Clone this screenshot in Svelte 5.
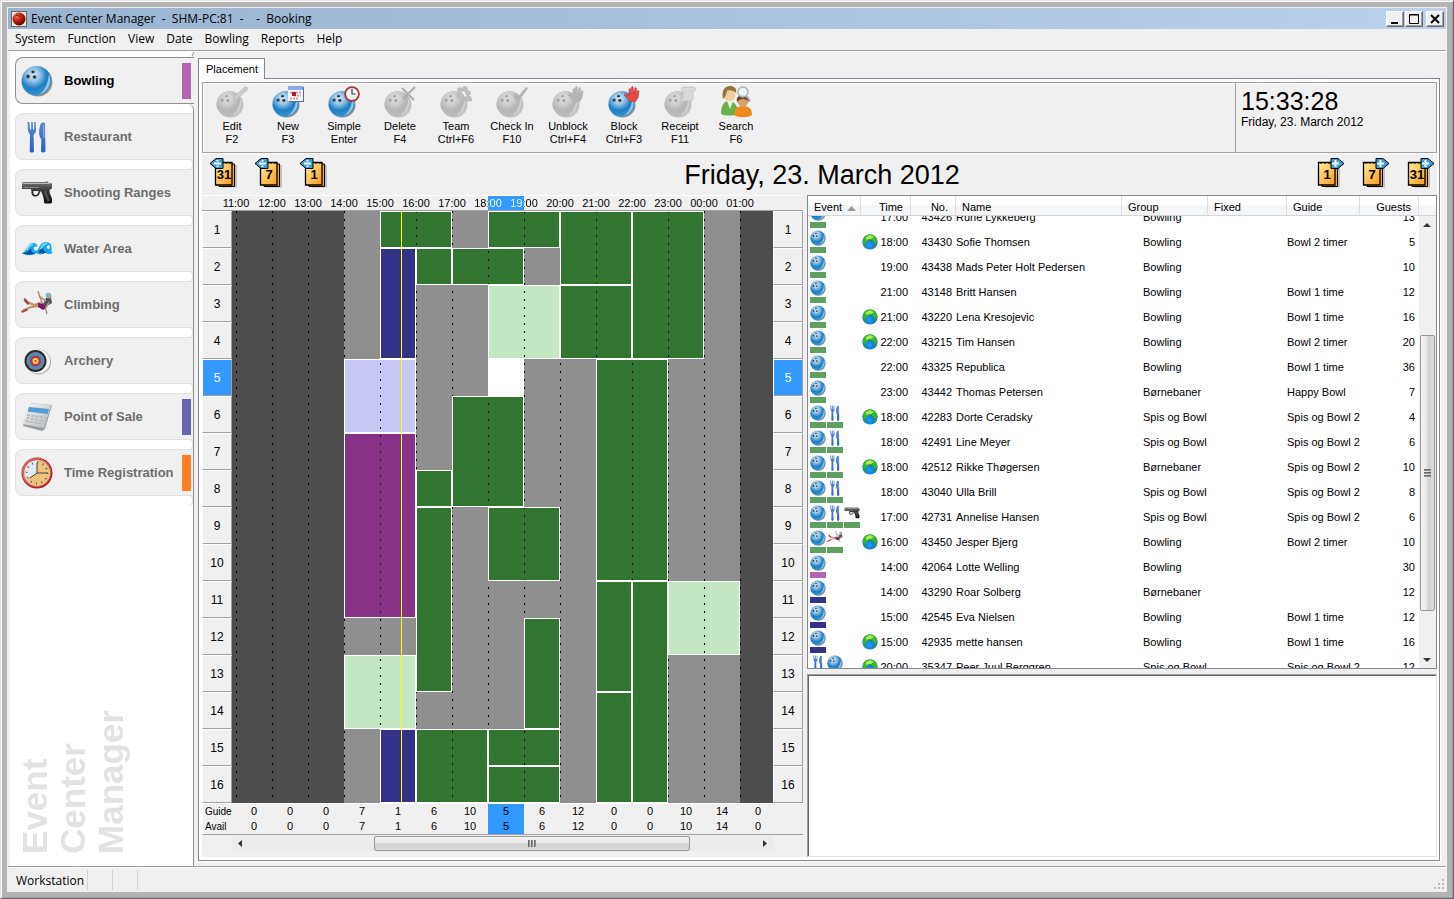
<script>
  const HOUR = 36;
  const LANE = 37;
  const FIRST_HOUR = 11;

  const menus = ['System', 'Function', 'View', 'Date', 'Bowling', 'Reports', 'Help'];

  const modules = [
    { name: 'Bowling', icon: 'ball', bar: 'orchid' },
    { name: 'Restaurant', icon: 'cutlery' },
    { name: 'Shooting Ranges', icon: 'gun' },
    { name: 'Water Area', icon: 'waves' },
    { name: 'Climbing', icon: 'climber' },
    { name: 'Archery', icon: 'target' },
    { name: 'Point of Sale', icon: 'calculator', bar: 'indigo' },
    { name: 'Time Registration', icon: 'clock', bar: 'orange' }
  ];
  let activeModule = $state('Bowling');

  const tools = [
    { name: 'Edit', key: 'F2', badge: 'pencil', disabled: true },
    { name: 'New', key: 'F3', badge: 'calendar' },
    { name: 'Simple', key: 'Enter', badge: 'smallclock' },
    { name: 'Delete', key: 'F4', badge: 'cross', disabled: true },
    { name: 'Team', key: 'Ctrl+F6', badge: 'team', disabled: true },
    { name: 'Check In', key: 'F10', badge: 'check', disabled: true },
    { name: 'Unblock', key: 'Ctrl+F4', badge: 'hand', disabled: true },
    { name: 'Block', key: 'Ctrl+F3', badge: 'hand' },
    { name: 'Receipt', key: 'F11', badge: 'receipt', disabled: true },
    { name: 'Search', key: 'F6', badge: 'people' }
  ];

  const hours = Array.from({ length: 15 }, (_, i) => (FIRST_HOUR + i) % 24);
  const lanes = Array.from({ length: 16 }, (_, i) => i + 1);
  const selected = { hour: 18, lane: 5 };
  const now = { hour: 15, minute: 34 };

  const avail = [0, 0, 0, 7, 1, 6, 10, 5, 6, 12, 0, 0, 10, 14, 0];

  // from hour, to hour, first lane, lane count, kind
  const bookings = [
    [15, 17, 1, 1, 'green'],
    [18, 20, 1, 1, 'green'],
    [20, 22, 1, 2, 'green'],
    [22, 24, 1, 4, 'green'],
    [15, 16, 2, 3, 'navy'],
    [16, 17, 2, 1, 'green'],
    [17, 19, 2, 1, 'green'],
    [18, 20, 3, 2, 'mint'],
    [20, 22, 3, 2, 'green'],
    [14, 16, 5, 2, 'lilac'],
    [18, 19, 5, 1, 'free'],
    [21, 23, 5, 6, 'green'],
    [17, 19, 6, 3, 'green'],
    [14, 16, 7, 5, 'purple'],
    [16, 17, 8, 1, 'green'],
    [16, 17, 9, 5, 'green'],
    [18, 20, 9, 2, 'green'],
    [21, 22, 11, 3, 'green'],
    [22, 23, 11, 6, 'green'],
    [23, 25, 11, 2, 'mint'],
    [19, 20, 12, 3, 'green'],
    [14, 16, 13, 2, 'mint'],
    [21, 22, 14, 3, 'green'],
    [15, 16, 15, 2, 'navy'],
    [16, 18, 15, 2, 'green'],
    [18, 20, 15, 1, 'green'],
    [18, 20, 16, 1, 'green']
  ];

  const events = [
    { icons: ['ball'], bar: 'leaf', time: '17:00', no: 43426, name: 'Rune Lykkeberg', group: 'Bowling', guide: '', guests: 13 },
    { icons: ['ball'], bar: 'leaf', web: true, time: '18:00', no: 43430, name: 'Sofie Thomsen', group: 'Bowling', guide: 'Bowl 2 timer', guests: 5 },
    { icons: ['ball'], bar: 'leaf', time: '19:00', no: 43438, name: 'Mads Peter Holt Pedersen', group: 'Bowling', guide: '', guests: 10 },
    { icons: ['ball'], bar: 'leaf', time: '21:00', no: 43148, name: 'Britt Hansen', group: 'Bowling', guide: 'Bowl 1 time', guests: 12 },
    { icons: ['ball'], bar: 'leaf', web: true, time: '21:00', no: 43220, name: 'Lena Kresojevic', group: 'Bowling', guide: 'Bowl 1 time', guests: 16 },
    { icons: ['ball'], bar: 'leaf', web: true, time: '22:00', no: 43215, name: 'Tim Hansen', group: 'Bowling', guide: 'Bowl 2 timer', guests: 20 },
    { icons: ['ball'], bar: 'leaf', time: '22:00', no: 43325, name: 'Republica', group: 'Bowling', guide: 'Bowl 1 time', guests: 36 },
    { icons: ['ball'], bar: 'leaf', time: '23:00', no: 43442, name: 'Thomas Petersen', group: 'Børnebaner', guide: 'Happy Bowl', guests: 7 },
    { icons: ['ball', 'cutlery'], bar: 'leaf', web: true, time: '18:00', no: 42283, name: 'Dorte Ceradsky', group: 'Spis og Bowl', guide: 'Spis og Bowl 2', guests: 4 },
    { icons: ['ball', 'cutlery'], bar: 'leaf', time: '18:00', no: 42491, name: 'Line Meyer', group: 'Spis og Bowl', guide: 'Spis og Bowl 2', guests: 6 },
    { icons: ['ball', 'cutlery'], bar: 'leaf', web: true, time: '18:00', no: 42512, name: 'Rikke Thøgersen', group: 'Børnebaner', guide: 'Spis og Bowl 2', guests: 10 },
    { icons: ['ball', 'cutlery'], bar: 'leaf', time: '18:00', no: 43040, name: 'Ulla Brill', group: 'Spis og Bowl', guide: 'Spis og Bowl 2', guests: 8 },
    { icons: ['ball', 'cutlery', 'gun'], bar: 'leaf', time: '17:00', no: 42731, name: 'Annelise Hansen', group: 'Spis og Bowl', guide: 'Spis og Bowl 2', guests: 6 },
    { icons: ['ball', 'climber'], bar: 'leaf', web: true, time: '16:00', no: 43450, name: 'Jesper Bjerg', group: 'Bowling', guide: 'Bowl 2 timer', guests: 10 },
    { icons: ['ball'], bar: 'orchid', time: '14:00', no: 42064, name: 'Lotte Welling', group: 'Bowling', guide: '', guests: 30 },
    { icons: ['ball'], bar: 'navy', time: '14:00', no: 43290, name: 'Roar Solberg', group: 'Børnebaner', guide: '', guests: 12 },
    { icons: ['ball'], bar: 'navy', time: '15:00', no: 42545, name: 'Eva Nielsen', group: 'Bowling', guide: 'Bowl 1 time', guests: 12 },
    { icons: ['ball'], bar: 'navy', web: true, time: '15:00', no: 42935, name: 'mette hansen', group: 'Bowling', guide: 'Bowl 1 time', guests: 16 },
    { icons: ['cutlery', 'ball'], bar: 'leaf', web: true, time: '20:00', no: 35347, name: 'Peer Juul Berggren', group: 'Spis og Bowl', guide: 'Spis og Bowl 2', guests: 12 }
  ];

  let scroller;
  $effect(() => {
    scroller.scrollTop = 11;
  });

  const pad = (n) => String(n).padStart(2, '0');
  const nowLeft = 4 + Math.round((now.hour - FIRST_HOUR + now.minute / 60) * HOUR) + 1;

  // keeps the hour dots of a booking in step with the dots of the grid
  function place([from, to, lane, count]) {
    const phase = -(((lane - 1) * LANE) % 8);
    return `grid-column: ${from - FIRST_HOUR + 2} / ${to - FIRST_HOUR + 2}; grid-row: ${lane} / span ${count}; background-position: 0 ${phase}px`;
  }
</script>

<svg class="defs" width="0" height="0" aria-hidden="true">
  <defs>
    <radialGradient id="g-ball" cx="0.4" cy="0.3" r="0.72">
      <stop offset="0" stop-color="#d8eaf6" />
      <stop offset="0.3" stop-color="#94c4e6" />
      <stop offset="0.62" stop-color="#1f7ec2" />
      <stop offset="0.85" stop-color="#2b8fd0" />
      <stop offset="1" stop-color="#6f8ea4" />
    </radialGradient>
    <radialGradient id="g-red" cx="0.35" cy="0.3" r="0.7">
      <stop offset="0" stop-color="#f07060" />
      <stop offset="0.5" stop-color="#c02010" />
      <stop offset="1" stop-color="#600800" />
    </radialGradient>
    <linearGradient id="g-note" x1="0" y1="0" x2="1" y2="1">
      <stop offset="0" stop-color="#ffef9c" />
      <stop offset="1" stop-color="#fb9a1c" />
    </linearGradient>
    <linearGradient id="g-fork" x1="0" y1="0" x2="0" y2="1">
      <stop offset="0" stop-color="#5a86c8" />
      <stop offset="1" stop-color="#2a5fd0" />
    </linearGradient>
    <linearGradient id="g-gun" x1="0" y1="0" x2="0" y2="1">
      <stop offset="0" stop-color="#7c7c7c" />
      <stop offset="0.4" stop-color="#3a3a3a" />
      <stop offset="1" stop-color="#111" />
    </linearGradient>
    <linearGradient id="g-calc" x1="0" y1="0" x2="1" y2="1">
      <stop offset="0" stop-color="#fafafa" />
      <stop offset="1" stop-color="#b4b8bc" />
    </linearGradient>
    <radialGradient id="g-globe" cx="0.45" cy="0.7" r="0.6">
      <stop offset="0" stop-color="#1ea0ff" />
      <stop offset="1" stop-color="#0b58b8" />
    </radialGradient>
  </defs>

  <symbol id="ball" viewBox="0 0 32 32">
    <circle cx="17" cy="17" r="14.500" fill="#8c8376" opacity="0.8" />
    <circle cx="15.500" cy="16" r="15" fill="url(#g-ball)" />
    <path d="M28 9a15 15 0 0 1-10 20.500c6-4 9-11 10-20.500z" fill="#c4e0f2" opacity="0.7" />
    <ellipse cx="12" cy="7" rx="1.700" ry="1.400" fill="#333c44" />
    <ellipse cx="7" cy="11.500" rx="1.800" ry="1.900" fill="#333c44" />
    <ellipse cx="13.500" cy="12" rx="1.900" ry="1.700" fill="#333c44" />
  </symbol>

  <symbol id="cutlery" viewBox="0 0 32 32">
    <path d="M6.500 1l.5 8c.2 2 1.500 3.500 2 5L8.700 30c0 2 4.300 2 4.300 0l-.5-16c1.500-1.500 2.500-3 2.500-5l-.3-8h-1.500v7.500h-1.200L11.700 1h-1.500v7.500H9L8.300 1z" fill="url(#g-fork)" />
    <path d="M22.500 31.500c-2.500 0-2.500-1-2.500-2L20.300 18C17.500 16 17.500 7 20 2.500c1-1.500 3.500-1.500 4 0l.5 27c0 1-.5 2-2 2z" fill="url(#g-fork)" />
    <path d="M22.500 4l.5 13" stroke="#9abcf0" stroke-width="1" />
  </symbol>

  <symbol id="gun" viewBox="0 0 32 32">
    <path d="M1 7l1-2h22l2-1 1 1.500 4 1v5l-2 1c-1 2 0 4 2 9v4l-1 1h-6l-1-1c0-4-1-7-3-11h-1c0 3-2 5-5 5-2 0-4-2-3.500-5L10 12H1z" fill="url(#g-gun)" />
    <path d="M12.500 14h5c0 2-1 4-3 4s-2.500-2-2-4z" fill="#eee" />
    <path d="M2 6.500h27" stroke="#b8b8b8" stroke-width="1" />
    <path d="M2 10.500h16" stroke="#999" stroke-width="0.800" />
    <path d="M24 14l3.500 10" stroke="#555" stroke-width="2" />
  </symbol>

  <symbol id="waves" viewBox="0 0 32 32">
    <path d="M1 20c4 0 5-10 11-10 3 0 5 2 4 4-2-1-3 0-3 1.500 0 3 3 3 4.500 0C19 12 21 9 25 9c4 0 6 3 5.500 7-.2 2 .5 3 1 4-2 1.500-5 1.500-7-.5-3 2.500-7 2.500-9 .5-4 3-10 3-14.500 0z" fill="#1ea6f2" />
    <path d="M1 20c6 0 7-3 9-5 0 5 3 6 6 4-4 3-10 3.500-15 1zM17 19c2-1 3-4 5-5 0 4 2 6 5 4-2 2.500-6 3.500-10 1z" fill="#0b4f9c" />
    <path d="M6 17c1-3 3-5.500 6-5.500M20 16c1-3 3-5.500 6-5.500" stroke="#8fe0ff" stroke-width="1.600" fill="none" />
    <path d="M29 13c-2-2-4 0-3 2s3 1 3-2z" fill="#e8f4fa" />
  </symbol>

  <symbol id="climber" viewBox="0 0 32 32">
    <path d="M17 2c1 4 3 9 5 14M24 18c1 3 1.500 5 2 7" stroke="#9a8264" stroke-width="1.200" fill="none" />
    <path d="M4 12l9 4 6-2M3 21l7-3 8-1" stroke="#c98d68" stroke-width="2.200" fill="none" stroke-linecap="round" />
    <path d="M1.500 22.500l4-1.500M4 10.500l3 4" stroke="#9a4a44" stroke-width="2.400" stroke-linecap="round" />
    <path d="M17 14l6 1 2 4-3 2-5-3z" fill="#79186e" />
    <path d="M22 15l3-6h5l1 5-7 4z" fill="#46545e" />
    <path d="M25 12l-7-5M28 13l-3 6" stroke="#c98d68" stroke-width="1.600" />
    <circle cx="27.500" cy="6.500" r="2.800" fill="#7fb0cc" />
    <circle cx="29" cy="8" r="1.500" fill="#c98d68" />
  </symbol>

  <symbol id="target" viewBox="0 0 32 32">
    <circle cx="17.500" cy="17" r="12.500" fill="#aaa" />
    <circle cx="17" cy="16.500" r="12" fill="#f6f6f6" />
    <circle cx="14.500" cy="16" r="11" fill="#262a2e" />
    <circle cx="14.500" cy="16" r="9" fill="#888" />
    <circle cx="14.500" cy="16" r="8" fill="#3b8fc2" />
    <circle cx="14.500" cy="16" r="5.500" fill="#c52f3c" />
    <circle cx="14.500" cy="16" r="3" fill="#f2d46a" />
    <circle cx="14.500" cy="16" r="1" fill="#8a3a20" />
  </symbol>

  <symbol id="calculator" viewBox="0 0 32 32">
    <path d="M8 2l23 2-7 24-3 2L2 25z" fill="#9a9ea2" />
    <path d="M7 2l23 2-7 23L2 23z" fill="url(#g-calc)" />
    <path d="M8 6l20 2-1.500 5L6.500 10.500z" fill="#4f9fd4" />
    <path d="M6 14l19 3M5.500 17l18.500 3M4.500 20l18 3" stroke="#b4babf" stroke-width="1.800" stroke-dasharray="3 1.300" />
  </symbol>

  <symbol id="clock" viewBox="0 0 32 32">
    <circle cx="16" cy="16" r="15.500" fill="#a32b2b" />
    <circle cx="15.500" cy="15.500" r="14.500" fill="#d8605c" />
    <circle cx="16" cy="16" r="12.800" fill="#dfe9ee" />
    <path d="M16 16V3.200a12.800 12.800 0 1 1-11 19.400z" fill="#eec27a" />
    <circle cx="16" cy="16" r="10.500" fill="none" stroke="#555" stroke-width="2" stroke-dasharray="1 4.500" />
    <path d="M16 6v10h11M16 16l-7 5" stroke="#444" stroke-width="1" fill="none" />
  </symbol>

  <symbol id="globe" viewBox="0 0 16 16">
    <circle cx="8" cy="8" r="7.600" fill="url(#g-globe)" />
    <path d="M.6 7C1 3 4 .5 8 .5S15 3 15.400 7l-1.400 3-2-1-2-3-2-.5L5 8l-2 2-1.500.500z" fill="#34b828" />
    <path d="M4 3l4-2 4 2-3 2H7L4 6z" fill="#a8e850" />
    <path d="M1 9c0 3 1 4 3 5.500L3.500 11zM15 9c0 3-1 4-3 5.500l.5-3.500z" fill="#2a9a50" />
  </symbol>

  <symbol id="pencil" viewBox="0 0 16 16">
    <path d="M1 15l2-5L13 1l3 1-1 2L5 13z" fill="#b8b8b8" stroke="#777" stroke-width="0.800" />
  </symbol>
  <symbol id="calendar" viewBox="0 0 16 16">
    <rect x="1" y="1" width="15" height="15" fill="#4a6fa8" />
    <rect x="0" y="0" width="15" height="15" fill="#f4f6fb" />
    <rect x="0" y="0" width="15" height="4" fill="#8aa8e8" />
    <path d="M2 6.500h11M6 9.500h7M2 12.500h9" stroke="#d89898" stroke-width="2" stroke-dasharray="2 1" />
    <rect x="4" y="6" width="4" height="4" fill="#a02030" />
  </symbol>
  <symbol id="smallclock" viewBox="0 0 16 16">
    <circle cx="8" cy="8" r="7.800" fill="#a83438" />
    <circle cx="8" cy="8" r="6" fill="#f4f4f4" />
    <path d="M8 3v5h3.500" stroke="#333" stroke-width="1.200" fill="none" />
  </symbol>
  <symbol id="cross" viewBox="0 0 16 16">
    <path d="M2 2l12 12M15 1L3 13" stroke="#555" stroke-width="2.200" fill="none" />
  </symbol>
  <symbol id="team" viewBox="0 0 16 16">
    <g fill="#888" stroke="#666" stroke-width="0.500">
      <circle cx="4" cy="4" r="2.500" />
      <circle cx="9" cy="3" r="2.500" />
      <path d="M1 12c0-7 7-7 7 0z" />
      <circle cx="12" cy="7" r="2.500" />
      <path d="M8 15c0-7 8-7 8 0z" />
    </g>
  </symbol>
  <symbol id="check" viewBox="0 0 16 16">
    <path d="M1 10l3-2 2 3 8-10 2 1L7 15H5z" fill="#666" />
  </symbol>
  <symbol id="hand" viewBox="0 0 16 16">
    <path d="M0 9l1.500-1L5 10V3l1.500-.5L7 8l.5-7L9 .5 9.500 8l1.500-6.500 1.500.5-.5 7 1.500-4.500 1.500.5L14 12l-3 4H7z" fill="#e84a46" stroke="#c82828" stroke-width="0.500" />
  </symbol>
  <symbol id="receipt" viewBox="0 0 16 16">
    <path d="M3 1h10c3 0 3 4 1 4h-1v8c0 2-2 2-3 2H3c-3 0-2-3 0-3V5C0 5 1 1 3 1z" fill="#d8d8d8" stroke="#888" stroke-width="0.800" />
  </symbol>
  <symbol id="people" viewBox="0 0 32 32">
    <path d="M1 28c0-9 3-13 8-13s9 4 9 13c-5 2-13 2-17 0z" fill="#6cb04c" />
    <path d="M7 15l3 8 3-8z" fill="#eef4e8" />
    <circle cx="9.500" cy="9" r="6" fill="#f2cda0" />
    <path d="M3 13C1 3 6 0 10 0s7 2 6 7c-2-3-5-2-8-3-2 1-1 6-5 9z" fill="#94743a" />
    <path d="M14 29c0-7 4-9 9-9s9 2 9 9c-4 3-14 3-18 0z" fill="#ee8a1c" />
    <circle cx="23" cy="15" r="5.500" fill="#d8a070" />
    <path d="M17 16c-1-5 2-7 6-7s7 3 6 7c-2-3-8-5-12 0z" fill="#6c4428" />
    <path d="M26 10l4 5" stroke="#9aa4aa" stroke-width="2" />
    <circle cx="23" cy="6" r="5" fill="#eaf6fc" fill-opacity="0.850" stroke="#aab4ba" stroke-width="1.500" />
  </symbol>
</svg>

{#snippet icon(name, size)}
  <svg class="icon" width={size} height={size} aria-hidden="true"><use href="#{name}" /></svg>
{/snippet}

{#snippet jump(days, forward)}
  <button type="button" class="jump" aria-label="{forward ? 'Forward' : 'Back'} {days} days">
    <svg width="28" height="32" viewBox="0 0 28 32" aria-hidden="true">
      <g transform={forward ? 'translate(-5 0)' : ''}>
        <path d="M12 8h16v22.500H12z" fill="#777" opacity="0.400" />
        <path d="M10 7h15.500v22.500H10z" fill="#f5a52c" stroke="#000" />
        <path d="M6.500 5.500H23V28H6.500z" fill="url(#g-note)" stroke="#000" stroke-width="1.300" />
        <path d="M9 5v2M13 5v2M17 5v2M21 5v2" stroke="#000" />
        <text x="15" y="22" text-anchor="middle" class="jump-num">{days}</text>
      </g>
      {#if forward}
        <path d="M14 1.500h7l6 5-6 5h-7z" fill="#3c9fd4" stroke="#000" />
        <path d="M18.500 3v7M15 6.500h7" stroke="#fff" stroke-width="2" />
      {:else}
        <path d="M14 1.500H7l-6 5 6 5h7z" fill="#3c9fd4" stroke="#000" />
        <path d="M5 6.500h7" stroke="#fff" stroke-width="2" />
        <path d="M8.500 3v1.500M8.500 8.500V10" stroke="#fff" stroke-width="2" />
      {/if}
    </svg>
  </button>
{/snippet}

{#snippet laneHeads()}
  <ol class="lanes">
    {#each lanes as lane}
      <li class:selected={lane === selected.lane}>{lane}</li>
    {/each}
  </ol>
{/snippet}

<div class="window">
  <div class="client">
    <header class="titlebar">
      <svg class="app-icon" width="16" height="16" viewBox="0 0 16 16" aria-hidden="true">
        <rect x="0.500" y="0.500" width="15" height="15" fill="#ece6da" stroke="#666" />
        <circle cx="8" cy="8" r="6.500" fill="url(#g-red)" />
        <circle cx="6" cy="4.500" r="0.700" fill="#300" />
        <circle cx="8.500" cy="5" r="0.700" fill="#300" />
      </svg>
      <span class="title">Event Center Manager&nbsp; -&nbsp; SHM-PC:81&nbsp; -&nbsp; &nbsp; -&nbsp; Booking</span>
      <div class="caption">
        <button type="button" aria-label="Minimize">
          <svg width="12" height="12" viewBox="0 0 12 12"><path d="M2 10h7" stroke="#000" stroke-width="2" /></svg>
        </button>
        <button type="button" aria-label="Maximize">
          <svg width="12" height="12" viewBox="0 0 12 12"><path d="M1.500 1.500h9v9h-9zM1 2h10" stroke="#000" fill="none" /></svg>
        </button>
        <button type="button" class="close" aria-label="Close">
          <svg width="12" height="12" viewBox="0 0 12 12"><path d="M2 2l8 8M10 2l-8 8" stroke="#000" stroke-width="2" /></svg>
        </button>
      </div>
    </header>

    <nav class="menubar">
      {#each menus as menu}
        <button type="button">{menu}</button>
      {/each}
    </nav>

    <div class="body">
      <aside class="sidebar">
        <ul class="modules">
          {#each modules as mod}
            <li class:active={mod.name === activeModule}>
              <button type="button" onclick={() => (activeModule = mod.name)}>
                {@render icon(mod.icon, 32)}
                <span>{mod.name}</span>
                {#if mod.bar}<i class="mark {mod.bar}"></i>{/if}
              </button>
            </li>
          {/each}
        </ul>
        <div class="rest">
          <p class="watermark">Event<br />Center<br />Manager</p>
        </div>
      </aside>

      <main>
        <div class="tabs"><button type="button" class="tab">Placement</button></div>
        <section class="panel">
          <div class="page">
            <div class="toolbar">
              <div class="tools">
                {#each tools as tool}
                  <button type="button" disabled={tool.disabled}>
                    <span class="pic">
                      {#if tool.badge === 'people'}
                        {@render icon('people', 32)}
                      {:else}
                        <svg class="icon" width="32" height="32" aria-hidden="true">
                          <use href="#ball" x="0" y="4" width="28" height="28" />
                          <use href="#{tool.badge}" x="16" y="0" width="16" height="16" />
                        </svg>
                      {/if}
                    </span>
                    {tool.name}<br />{tool.key}
                  </button>
                {/each}
              </div>
              <div class="now">
                <time class="clock">15:33:28</time>
                <span>Friday, 23. March 2012</span>
              </div>
            </div>

            <div class="datebar">
              <div class="jumps">
                {@render jump(31, false)}
                {@render jump(7, false)}
                {@render jump(1, false)}
              </div>
              <h1>Friday, 23. March 2012</h1>
              <div class="jumps">
                {@render jump(1, true)}
                {@render jump(7, true)}
                {@render jump(31, true)}
              </div>
            </div>

            <div class="work">
              <div class="schedule">
                <div class="hours">
                  {#each hours as hour}
                    <span class:from={hour === selected.hour} class:to={hour === selected.hour + 1}>{pad(hour)}:00</span>
                  {/each}
                </div>

                {@render laneHeads()}
                <div class="grid">
                  <i class="closed early"></i>
                  <i class="closed late"></i>
                  <i class="dots"></i>
                  {#each bookings as booking}
                    <i class="booking {booking[4]}" style={place(booking)}></i>
                  {/each}
                  <i class="now-line" style="left: {nowLeft}px"></i>
                </div>
                {@render laneHeads()}

                <div class="avail">
                  {#each ['Guide', 'Avail'] as label}
                    <div class="avail-row">
                      <b>{label}</b>
                      {#each avail as count, i}
                        <span class:selected={hours[i] === selected.hour}>{count}</span>
                      {/each}
                    </div>
                  {/each}
                </div>

                <div class="hscroll">
                  <svg width="16" height="15" viewBox="0 0 16 15"><path d="M10 4v7L6 7.500z" fill="#333" /></svg>
                  <div class="hthumb"><i></i><i></i><i></i></div>
                  <svg width="16" height="15" viewBox="0 0 16 15"><path d="M6 4v7l4-3.500z" fill="#333" /></svg>
                </div>
              </div>

              <div class="side">
                <div class="list">
                  <div class="scroller" bind:this={scroller}>
                    <table>
                      <colgroup>
                        <col class="c-event" /><col class="c-time" /><col class="c-no" /><col />
                        <col class="c-group" /><col class="c-fixed" /><col class="c-guide" /><col class="c-guests" />
                      </colgroup>
                      <thead>
                        <tr>
                          <th>
                            Event
                            <svg class="sort" width="9" height="5" viewBox="0 0 9 5"><path d="M0 5l4.500-5L9 5z" fill="#999" /></svg>
                          </th>
                          <th class="num">Time</th>
                          <th class="num">No.</th>
                          <th>Name</th>
                          <th>Group</th>
                          <th>Fixed</th>
                          <th>Guide</th>
                          <th class="num">Guests</th>
                        </tr>
                      </thead>
                      <tbody>
                        {#each events as event}
                          <tr>
                            <td class="kinds">
                              <div>
                                {#each event.icons as name}
                                  <span>{@render icon(name, 16)}<i class={event.bar}></i></span>
                                {/each}
                              </div>
                            </td>
                            <td class="when">
                              <div>
                                {#if event.web}{@render icon('globe', 16)}{/if}
                                <span>{event.time}</span>
                              </div>
                            </td>
                            <td class="num">{event.no}</td>
                            <td>{event.name}</td>
                            <td class="group">{event.group}</td>
                            <td></td>
                            <td>{event.guide}</td>
                            <td class="num">{event.guests}</td>
                          </tr>
                        {/each}
                      </tbody>
                    </table>
                  </div>
                  <div class="vscroll">
                    <div class="corner"></div>
                    <svg width="16" height="17" viewBox="0 0 16 17"><path d="M4 11h8L8 7z" fill="#333" /></svg>
                    <div class="track"><div class="vthumb"><i></i><i></i><i></i></div></div>
                    <svg width="16" height="17" viewBox="0 0 16 17"><path d="M4 7h8l-4 4z" fill="#333" /></svg>
                  </div>
                </div>
                <textarea class="notes" aria-label="Notes"></textarea>
              </div>
            </div>
          </div>
        </section>
      </main>
    </div>

    <footer class="status">
      <span>Workstation</span>
      <span></span>
      <span></span>
      <svg class="grip" width="10" height="10" viewBox="0 0 10 10" aria-hidden="true">
        <path d="M8 1h2M4 5h2M8 5h2M0 9h2M4 9h2M8 9h2" stroke="#b8b8b8" stroke-width="2" />
      </svg>
    </footer>
  </div>
</div>

<style>
  :global(body) {
    margin: 0;
  }

  .defs {
    position: absolute;
  }

  .icon {
    display: block;
    flex: none;
  }

  button {
    font: inherit;
    color: inherit;
    background: none;
    border: none;
    padding: 0;
    margin: 0;
  }

  ul,
  ol {
    list-style: none;
    margin: 0;
    padding: 0;
  }

  .window {
    display: flex;
    min-height: 100vh;
    box-sizing: border-box;
    padding: 6px;
    border: 1px solid;
    border-color: #e3e3e3 #696969 #696969 #e3e3e3;
    box-shadow: inset 1px 1px #fff, inset -1px -1px #a0a0a0;
    background: #b4b4b4;
    font-family: 'Liberation Sans', Arial, sans-serif;
    font-size: 11px;
    color: #000;
  }

  .client {
    flex: 1;
    display: flex;
    flex-direction: column;
    min-width: 0;
    padding: 1px;
    background: #f0f0f0;
  }

  .titlebar,
  .menubar,
  .status {
    font-family: 'Open Sans', 'Noto Sans', sans-serif;
    font-size: 12px;
  }

  .titlebar {
    display: flex;
    align-items: center;
    height: 21px;
    padding: 0 2px 0 3px;
    background: linear-gradient(90deg, #99b4d1, #b9d1ea);
  }

  .title {
    flex: 1;
    margin-left: 4px;
  }

  .caption {
    display: flex;
    gap: 1px;
  }

  .caption button {
    display: flex;
    align-items: center;
    justify-content: center;
    width: 18px;
    height: 16px;
    background: #f0f0f0;
    border: 1px solid;
    border-color: #fff #696969 #696969 #fff;
    box-shadow: inset -1px -1px #a0a0a0;
  }

  .caption .close {
    margin-left: 2px;
  }

  .menubar {
    display: flex;
    gap: 12px;
    height: 19px;
    padding: 0 0 2px 7px;
    border-bottom: 1px solid #a0a0a0;
    box-shadow: 0 1px #fff;
  }

  .body {
    flex: 1;
    display: flex;
    padding-top: 1px;
  }

  /* sidebar */

  .sidebar {
    display: flex;
    flex-direction: column;
    width: 184px;
    margin-left: 2px;
    background: #fff;
  }

  .modules {
    background: linear-gradient(#f0f0f0, #f0f0f0) right / 12px 100% no-repeat;
  }

  .modules::before {
    content: '';
    display: block;
    box-sizing: border-box;
    height: 6px;
    margin-bottom: -1px;
    background: #fff;
    border-right: 1px solid #909090;
    border-bottom: 1px solid transparent;
    border-radius: 0 0 6px 0;
  }

  .modules li {
    height: 56px;
    padding-left: 5px;
    border-right: 1px solid #909090;
  }

  .modules li::after {
    content: '';
    display: block;
    box-sizing: border-box;
    height: 9px;
    background: #fff;
    border-right: 1px solid #e0e0e0;
    border-radius: 0 5px 5px 0;
  }

  .modules button {
    display: flex;
    align-items: center;
    width: 100%;
    height: 47px;
    padding: 0 2px 0 5px;
    border: 1px solid #e0e0e0;
    border-right: none;
    border-radius: 8px 0 0 8px;
    background: #f0f0f0;
    font-size: 13px;
    font-weight: bold;
    color: #6d6d6d;
    text-align: left;
  }

  .modules .active {
    border-right: none;
    padding-right: 0;
  }

  .modules .active button {
    border-color: #909090;
    padding-right: 3px;
    color: #000;
  }

  .modules .active::after {
    border-right-color: #909090;
    border-radius: 0 6px 0 0;
  }

  .modules span {
    flex: 1;
    margin-left: 11px;
    white-space: nowrap;
  }

  .mark {
    width: 9px;
    height: 36px;
  }

  .orchid { background: #b066b0; }
  .indigo { background: #6666b0; }
  .orange { background: #ff7f27; }
  .leaf { background: #5f9f5f; }

  .rest {
    flex: 1;
    display: flex;
    align-items: flex-end;
    border-right: 1px solid #909090;
  }

  .watermark {
    margin: 0 0 12px 6px;
    writing-mode: vertical-rl;
    transform: rotate(180deg);
    font-size: 35px;
    line-height: 38px;
    font-weight: bold;
    color: #e2e2e2;
  }

  /* tab page */

  main {
    flex: 1;
    display: flex;
    flex-direction: column;
    min-width: 0;
    padding: 6px 6px 5px 4px;
  }

  .tabs {
    height: 20px;
  }

  .tab {
    position: relative;
    height: 21px;
    padding: 0 6px 1px 7px;
    background: #fff;
    border: 1px solid #828790;
    border-bottom: none;
  }

  .panel {
    flex: 1;
    display: flex;
    padding: 3px 2px 3px 3px;
    background: #fff;
    border: 1px solid #828790;
    box-shadow: 1px 1px #fff;
  }

  .page {
    flex: 1;
    display: flex;
    flex-direction: column;
    min-width: 0;
    background: #f0f0f0;
  }

  .toolbar {
    display: flex;
    border: 1px solid #a0a0a0;
    box-shadow: inset 1px 1px #fff, 0 1px #fff;
  }

  .tools {
    flex: 1;
    display: flex;
    padding: 3px 0 6px 1px;
  }

  .tools button {
    width: 56px;
    line-height: 13px;
    white-space: nowrap;
  }

  .tools button:disabled {
    color: #000;
  }

  .pic {
    display: flex;
    justify-content: center;
    padding-bottom: 2px;
  }

  .tools button:disabled .pic {
    filter: grayscale(1) brightness(1.1) contrast(0.6) opacity(0.5);
  }

  .now {
    width: 195px;
    padding: 4px 0 0 5px;
    border-left: 1px solid #a0a0a0;
    font-size: 12px;
    line-height: 14px;
  }

  .clock {
    display: block;
    font-size: 25px;
    line-height: 28px;
  }

  .datebar {
    display: flex;
    justify-content: space-between;
    align-items: center;
    height: 42px;
    padding: 0 2px 0 7px;
  }

  .datebar h1 {
    margin: 0;
    padding-top: 2px;
    font-size: 27px;
    font-weight: normal;
  }

  .jumps {
    display: flex;
    gap: 17px;
    padding-bottom: 2px;
  }

  .jump {
    height: 32px;
  }

  .jump svg {
    display: block;
  }

  .jump-num {
    font-size: 13px;
    font-weight: bold;
  }

  .work {
    flex: 1;
    display: flex;
    gap: 4px;
  }

  /* lane schedule */

  .schedule {
    display: grid;
    grid-template-columns: 30px 541px 30px;
    grid-template-rows: 16px auto 32px 1fr;
    flex: none;
  }

  .hours {
    grid-column: 1 / -1;
    display: flex;
    padding-left: 16px;
    border-top: 1px solid #fff;
    border-bottom: 1px solid #a0a0a0;
    line-height: 14px;
  }

  .hours span {
    width: 36px;
    text-align: center;
  }

  .hours .from,
  .hours .to {
    color: transparent;
    background-clip: text, border-box;
  }

  .hours .from {
    background-image: linear-gradient(90deg, #000 50%, #fff 50%), linear-gradient(90deg, #f0f0f0 50%, #3399ff 50%);
  }

  .hours .to {
    background-image: linear-gradient(90deg, #fff 50%, #000 50%), linear-gradient(90deg, #3399ff 50%, #f0f0f0 50%);
  }

  .lanes li {
    height: 37px;
    box-sizing: border-box;
    border: 1px solid;
    border-color: #fff #a0a0a0 #a0a0a0 #fff;
    line-height: 36px;
    text-align: center;
    font-size: 12px;
  }

  .lanes .selected {
    background: #3399ff;
    color: #fff;
  }

  .grid {
    position: relative;
    display: grid;
    grid-template-columns: 4px repeat(14, 36px) 33px;
    grid-template-rows: repeat(16, 37px);
    background: #8f8f8f;
    overflow: hidden;
  }

  .closed {
    grid-row: 1 / -1;
    background: #4d4d4d;
  }

  .early {
    grid-column: 1 / 5;
  }

  .late {
    grid-column: 16 / -1;
  }

  .dots {
    grid-row: 1 / -1;
    grid-column: 2 / -1;
    background: conic-gradient(at 1px 2px, transparent 75%, #000 0) 0 0 / 36px 8px;
  }

  .booking {
    border: 1px solid #fff;
    background-image: conic-gradient(at 1px 2px, transparent 75%, #000 0);
    background-size: 36px 8px;
    background-origin: border-box;
  }

  .green { background-color: #317531; }
  .mint { background-color: #c3e6c3; }
  .navy { background-color: #323287; }
  .purple { background-color: #873187; }
  .lilac { background-color: #c7c7f4; }
  .free { background: #fff; }

  .now-line {
    position: absolute;
    top: 0;
    bottom: 0;
    width: 1px;
    background: #ffff00;
  }

  .avail {
    grid-column: 1 / -1;
    border-top: 1px solid #fff;
    border-left: 1px solid #fff;
    border-bottom: 1px solid #a0a0a0;
  }

  .avail-row {
    display: flex;
    line-height: 15px;
  }

  .avail-row b {
    width: 33px;
    font-weight: normal;
    font-size: 10px;
    text-indent: 2px;
  }

  .avail-row span {
    width: 36px;
    text-align: center;
  }

  .avail-row .selected {
    background: #3399ff;
  }

  .hscroll {
    grid-column: 2;
    align-self: start;
    display: flex;
    margin-top: 1px;
    height: 15px;
    background: #ececec;
  }

  .hthumb {
    flex: 0 0 316px;
    display: flex;
    align-items: center;
    justify-content: center;
    gap: 1px;
    box-sizing: border-box;
    margin: 0 auto 0 126px;
    border: 1px solid #979797;
    border-radius: 2px;
    background: linear-gradient(#f4f4f4, #e6e6e6 45%, #cfcfcf 55%, #dcdcdc);
  }

  .hthumb i {
    width: 2px;
    height: 7px;
    background: linear-gradient(90deg, #555, #aaa);
  }

  /* event list */

  .side {
    flex: 1;
    display: flex;
    flex-direction: column;
    gap: 5px;
    min-width: 0;
  }

  .list {
    display: flex;
    flex: 0 0 472px;
    border: 1px solid #828790;
    background: #fff;
  }

  .scroller {
    flex: 1;
    height: 472px;
    overflow: hidden;
  }

  table {
    width: 100%;
    table-layout: fixed;
    border-collapse: separate;
    border-spacing: 0;
  }

  .c-event { width: 53px; }
  .c-time { width: 50px; }
  .c-no { width: 45px; }
  .c-group { width: 86px; }
  .c-fixed { width: 79px; }
  .c-guide { width: 73px; }
  .c-guests { width: 59px; }

  th {
    position: sticky;
    top: 0;
    z-index: 1;
    height: 20px;
    box-sizing: border-box;
    padding: 2px 7px 0 6px;
    border-right: 1px solid #dfdfdf;
    border-bottom: 1px solid #d5d5d5;
    background: linear-gradient(#fff 50%, #f5f6f8 50%);
    font-weight: normal;
    text-align: left;
    white-space: nowrap;
  }

  .sort {
    margin-left: 2px;
  }

  td {
    height: 23px;
    padding: 0 0 2px;
    white-space: nowrap;
  }

  .num {
    text-align: right;
  }

  td.num {
    padding-right: 4px;
  }

  .kinds div {
    display: flex;
    gap: 1px;
    height: 23px;
    padding-left: 2px;
  }

  .kinds i {
    display: block;
    width: 16px;
    height: 6px;
    margin-top: 1px;
  }

  .when div {
    display: flex;
    align-items: center;
    padding: 0 3px 0 1px;
  }

  .when span {
    margin-left: auto;
  }

  .group {
    padding-left: 21px;
  }

  .vscroll {
    display: flex;
    flex-direction: column;
    width: 17px;
    background: #f0f0f0;
  }

  .corner {
    height: 20px;
    box-sizing: border-box;
    border-bottom: 1px solid #d5d5d5;
    background: linear-gradient(#fff 50%, #f5f6f8 50%);
  }

  .track {
    flex: 1;
    display: flex;
    flex-direction: column;
    padding: 102px 1px 40px;
  }

  .vthumb {
    flex: 1;
    display: flex;
    flex-direction: column;
    align-items: center;
    justify-content: center;
    gap: 1px;
    border: 1px solid #979797;
    border-radius: 2px;
    background: linear-gradient(90deg, #f4f4f4, #e6e6e6 45%, #cfcfcf 55%, #dcdcdc);
  }

  .vthumb i {
    width: 7px;
    height: 2px;
    background: linear-gradient(#555, #aaa);
  }

  .notes {
    flex: 1;
    width: 100%;
    box-sizing: border-box;
    margin: 0;
    padding: 2px;
    border: 1px solid;
    border-color: #a0a0a0 #e3e3e3 #e3e3e3 #a0a0a0;
    border-radius: 0;
    box-shadow: inset 1px 1px #696969;
    background: #fff;
    font: inherit;
    outline: none;
    resize: none;
  }

  /* status bar */

  .status {
    display: flex;
    height: 25px;
    padding: 3px 0 1px;
    box-sizing: border-box;
    border-top: 1px solid #a0a0a0;
    box-shadow: inset 0 1px #fff;
  }

  .status span {
    width: 24px;
    border-right: 1px solid #d5d5d5;
    line-height: 21px;
  }

  .status span:first-child {
    width: 71px;
    padding-left: 8px;
  }

  .grip {
    margin: auto 2px 1px auto;
  }
</style>
